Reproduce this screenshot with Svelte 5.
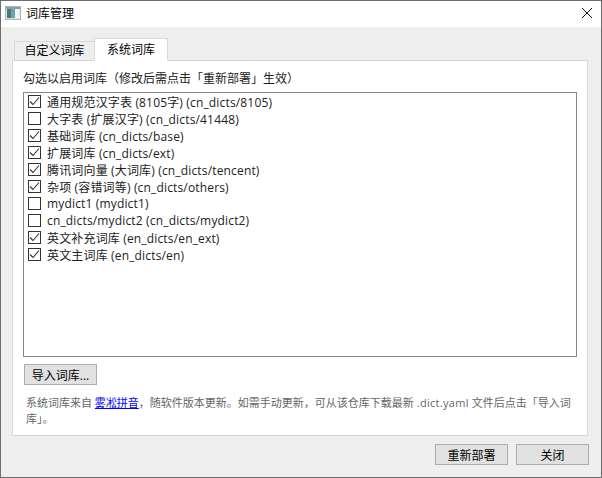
<script>
    const dicts = [
        { label: '通用规范汉字表 (8105字) (cn_dicts/8105)', on: true },
        { label: '大字表 (扩展汉字) (cn_dicts/41448)', on: false },
        { label: '基础词库 (cn_dicts/base)', on: true },
        { label: '扩展词库 (cn_dicts/ext)', on: true },
        { label: '腾讯词向量 (大词库) (cn_dicts/tencent)', on: true },
        { label: '杂项 (容错词等) (cn_dicts/others)', on: true },
        { label: 'mydict1 (mydict1)', on: false },
        { label: 'cn_dicts/mydict2 (cn_dicts/mydict2)', on: false },
        { label: '英文补充词库 (en_dicts/en_ext)', on: true },
        { label: '英文主词库 (en_dicts/en)', on: true },
    ];
</script>

<div class="window">
    <header class="titlebar">
        <svg class="app-icon" width="16" height="14" viewBox="0 0 16 14">
            <rect x="0.5" y="0.5" width="15" height="13" fill="#e4e4e4" stroke="#b4b4b4" />
            <rect x="1" y="1" width="14" height="2" fill="#9a9a9a" />
            <rect x="2" y="3" width="4" height="9" fill="#3f7f7a" />
            <rect x="6" y="3" width="4" height="9" fill="#6f9fb0" />
            <rect x="10" y="3" width="4" height="9" fill="#f4f4f4" />
        </svg>
        <span class="title">词库管理</span>
        <svg class="close" width="10" height="10" viewBox="0 0 10 10">
            <path d="M0 0L10 10M10 0L0 10" stroke="#111" stroke-width="1" fill="none" />
        </svg>
    </header>

    <main class="body">
        <div class="tabs">
            <div class="tab">自定义词库</div>
            <div class="tab active">系统词库</div>
        </div>
        <section class="pane">
            <p class="hint">勾选以启用词库（修改后需点击「重新部署」生效）</p>
            <ul class="list">
                {#each dicts as d}
                    <li>
                        <span class="check">
                            {#if d.on}
                                <svg width="11" height="11" viewBox="0 0 11 11">
                                    <path d="M1 5.5L4 8.5L10 1.5" stroke="#333" stroke-width="1.1" fill="none" />
                                </svg>
                            {/if}
                        </span>
                        <span>{d.label}</span>
                    </li>
                {/each}
            </ul>
            <div class="import-row">
                <button>导入词库...</button>
            </div>
            <p class="note">系统词库来自 <a href="#top">雾凇拼音</a>，随软件版本更新。如需手动更新，可从该仓库下载最新 <span class="file">.dict.yaml</span> 文件后点击「导入词库」。</p>
        </section>
        <footer class="actions">
            <button>重新部署</button>
            <button>关闭</button>
        </footer>
    </main>
</div>

<style>
    :global(body) {
        margin: 0;
    }

    .window {
        box-sizing: border-box;
        width: 602px;
        height: 478px;
        display: flex;
        flex-direction: column;
        border: 1px solid #6e6e6e;
        font-family: "Open Sans", "Noto Sans CJK SC", sans-serif;
        font-size: 12px;
        color: #000;
        background: #eeeeee;
    }

    .titlebar {
        box-sizing: border-box;
        height: 26px;
        flex: none;
        display: flex;
        align-items: center;
        background: #fff;
        padding: 0 9px 2px 4px;
    }

    .app-icon {
        margin-right: 5px;
    }

    .title {
        flex: 1;
    }

    .body {
        flex: 1;
        display: flex;
        flex-direction: column;
        padding: 11px 13px 0 11px;
        min-height: 0;
    }

    .tabs {
        display: flex;
        height: 23px;
        align-items: flex-end;
        padding-left: 2px;
        margin-bottom: -1px;
        position: relative;
    }

    .tab {
        box-sizing: border-box;
        width: 81px;
        height: 20px;
        line-height: 18px;
        text-align: center;
        background: #eeeeee;
        border: 1px solid #d9d9d9;
    }

    .tab.active {
        width: 74px;
        height: 23px;
        line-height: 22px;
        background: #fff;
        border-bottom-color: #fff;
        margin-left: -1px;
    }

    .pane {
        box-sizing: border-box;
        height: 376px;
        background: #fff;
        border: 1px solid #d9d9d9;
        padding: 9px 10px 0 10px;
    }

    .hint {
        margin: 0;
        height: 22px;
        line-height: 17px;
        color: #222;
    }

    .list {
        box-sizing: border-box;
        height: 265px;
        margin: 0;
        padding: 0;
        list-style: none;
        border: 1px solid #838790;
    }

    li {
        display: flex;
        align-items: center;
        height: 17px;
        padding-left: 4px;
        color: #222;
        letter-spacing: 0.16px;
    }

    .check {
        box-sizing: border-box;
        width: 13px;
        height: 13px;
        margin-right: 6px;
        border: 1px solid #333;
        background: #fff;
        display: flex;
        align-items: center;
        justify-content: center;
    }

    .import-row {
        margin-top: 7px;
        padding-left: 1px;
    }

    button {
        box-sizing: border-box;
        display: block;
        width: 73px;
        height: 21px;
        padding: 0;
        font: inherit;
        color: #000;
        background: #e1e1e1;
        border: 1px solid #adadad;
    }

    .note {
        margin: 10px 0 0 3px;
        line-height: 16px;
        color: #666;
        font-size: 11px;
    }

    .file {
        letter-spacing: 0.3px;
    }

    a {
        color: #0000ff;
    }

    .actions {
        display: flex;
        justify-content: flex-end;
        gap: 8px;
        margin-top: 8px;
        margin-right: -1px;
    }
</style>
